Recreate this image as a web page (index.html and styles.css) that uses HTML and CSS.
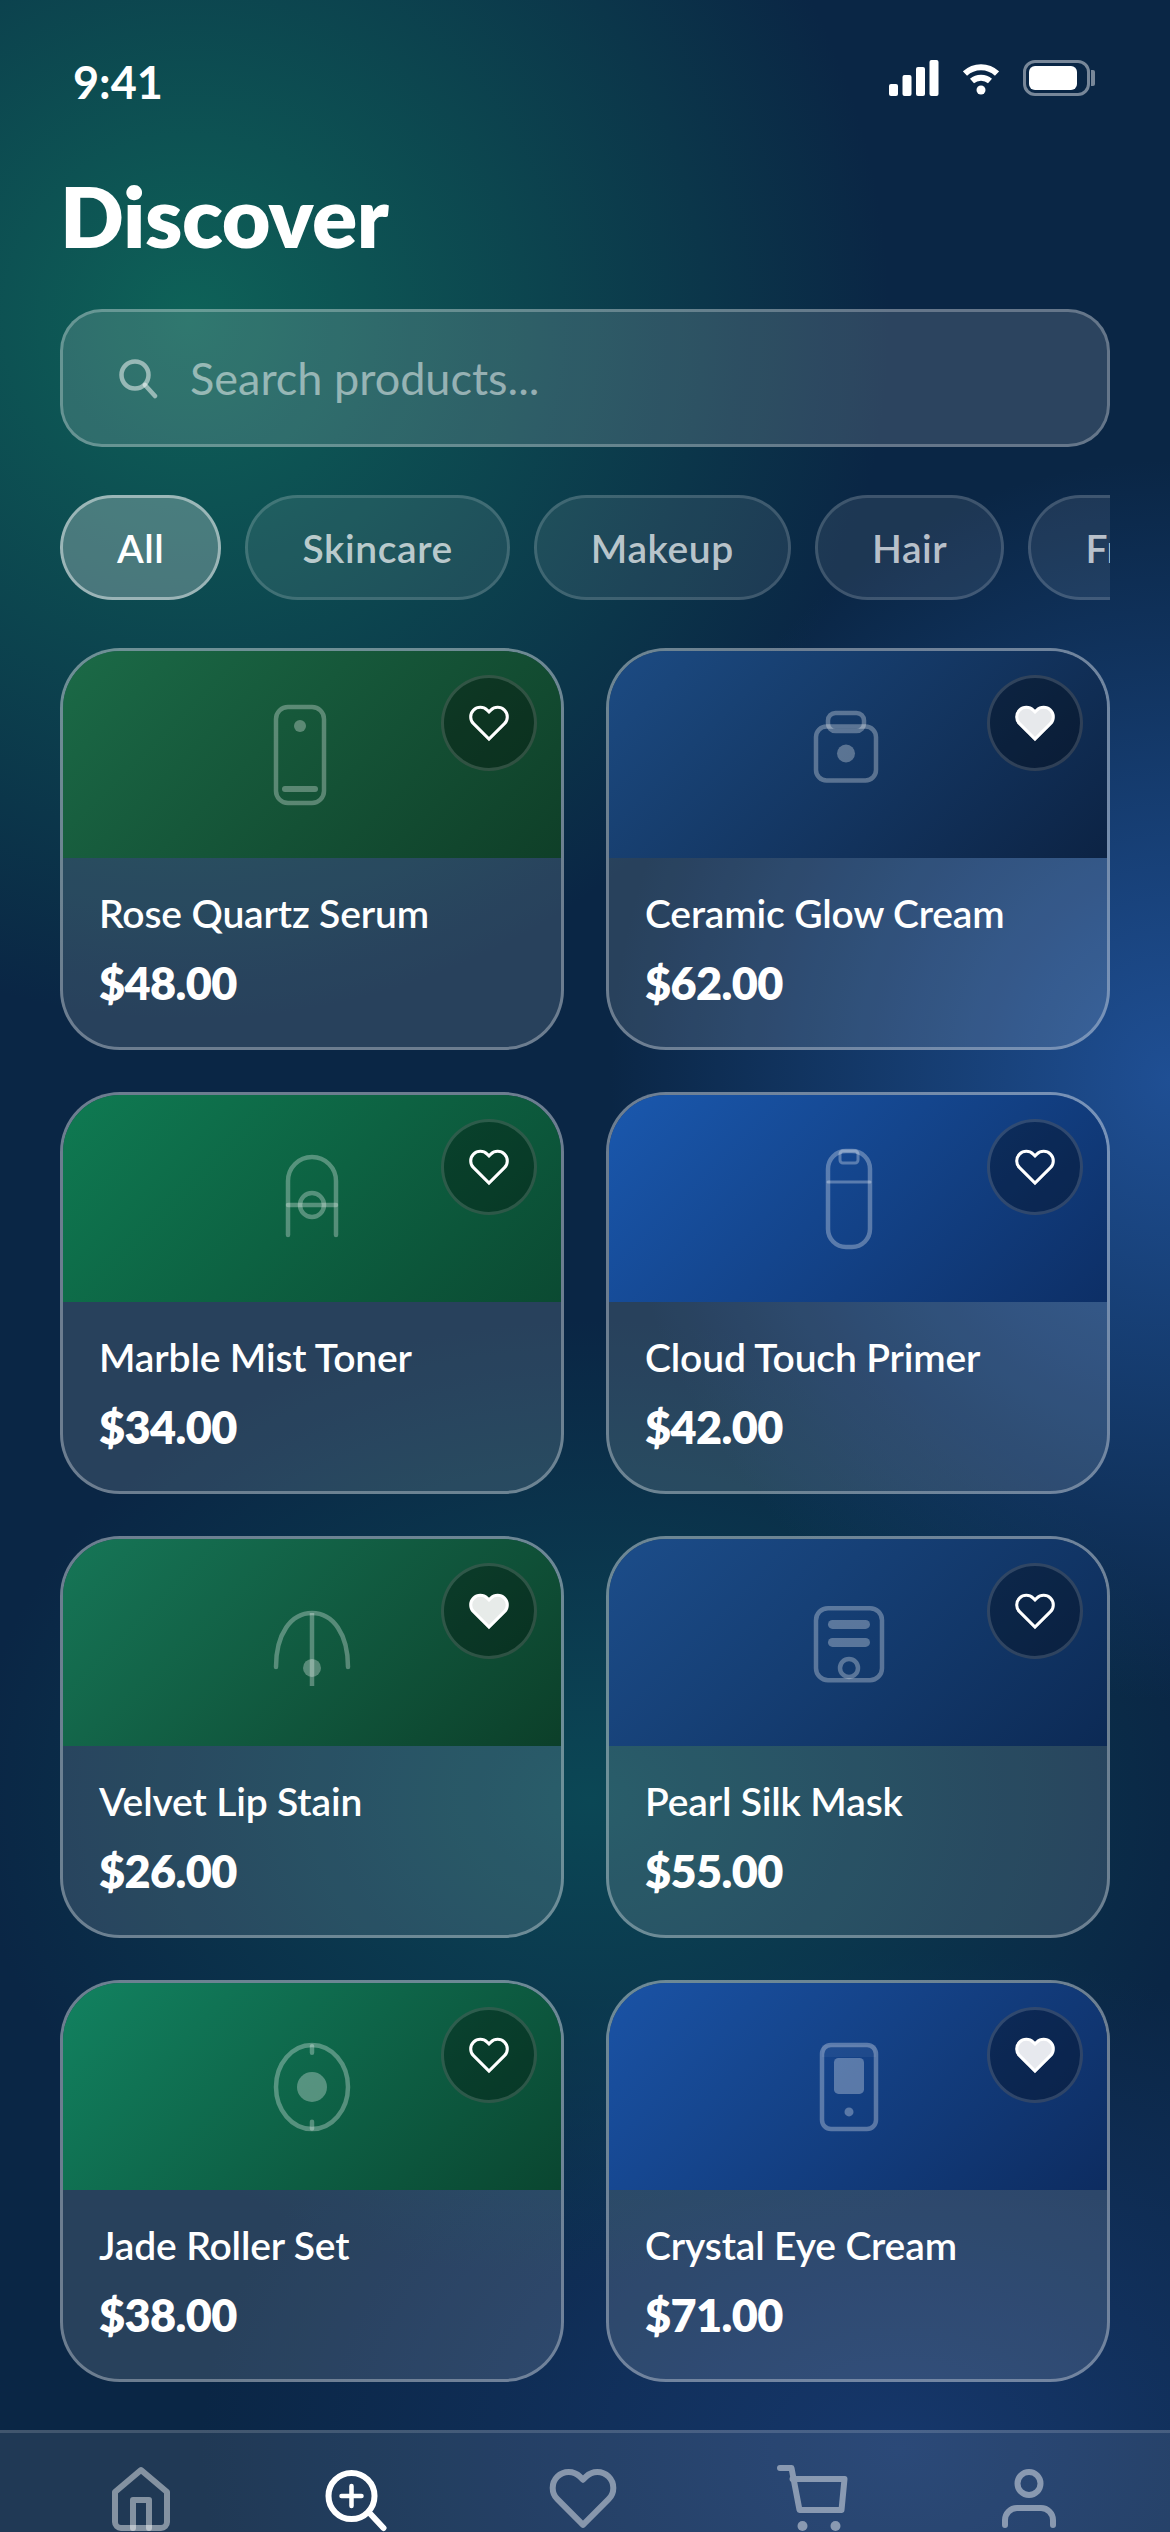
FILE: index.html
```html
<!DOCTYPE html>
<html lang="en">
<head>
<meta charset="utf-8">
<title>Discover</title>
<link rel="stylesheet" href="styles.css">
</head>
<body>
<div class="app">
  <header class="status">
    <span class="time">9:41</span>
    <div class="status-icons">
      <svg class="signal" width="50" height="36" viewBox="0 0 50 36"><rect x="0" y="24" width="9" height="12" rx="2"/><rect x="13.5" y="15" width="9" height="21" rx="2"/><rect x="27" y="7" width="9" height="29" rx="2"/><rect x="40.5" y="0" width="9" height="36" rx="2"/></svg>
      <svg class="wifi" width="36" height="32" viewBox="0 0 36 32"><path d="M2 10.5C11 2 25 2 34 10.5"/><path d="M9 18C14 13.5 22 13.5 27 18"/><circle class="wifi-dot" cx="18" cy="27" r="4.5"/></svg>
      <div class="battery"><div class="battery-body"><div class="battery-fill"></div></div><div class="battery-nib"></div></div>
    </div>
  </header>
  <h1 class="title">Discover</h1>
  <div class="search">
    <svg class="search-icon" width="42" height="42" viewBox="0 0 42 42"><circle cx="18" cy="18" r="13.5"/><path d="M28 28l10 11"/></svg>
    <span class="search-text">Search products...</span>
  </div>
  <div class="chips">
    <span class="chip active">All</span>
    <span class="chip">Skincare</span>
    <span class="chip">Makeup</span>
    <span class="chip">Hair</span>
    <span class="chip">Fragrance</span>
  </div>
  <main class="grid">
    <article class="card">
      <div class="thumb g1">
        <svg class="art" viewBox="0 0 48 48"><rect x="12" y="8" width="16" height="32" rx="4"/><circle class="solid" cx="20" cy="14.3" r="2"/><rect class="solid" x="14" y="34.3" width="12" height="2" rx="1"/></svg>
        <button class="fav"><svg viewBox="0 0 24 24"><path d="M20.84 4.61a5.5 5.5 0 0 0-7.78 0L12 5.67l-1.06-1.06a5.5 5.5 0 0 0-7.78 7.78L12 21.23l8.84-8.84a5.5 5.5 0 0 0 0-7.78z"/></svg></button>
      </div>
      <div class="info"><div class="name">Rose Quartz Serum</div><div class="price">$48.00</div></div>
    </article>
    <article class="card">
      <div class="thumb b1">
        <svg class="art" viewBox="0 0 48 48"><rect x="10" y="14.5" width="20" height="18" rx="3.5"/><rect x="14" y="10" width="12" height="6" rx="2.5"/><circle class="solid" cx="20" cy="23.5" r="3"/></svg>
        <button class="fav on"><svg viewBox="0 0 24 24"><path d="M20.84 4.61a5.5 5.5 0 0 0-7.78 0L12 5.67l-1.06-1.06a5.5 5.5 0 0 0-7.78 7.78L12 21.23l8.84-8.84a5.5 5.5 0 0 0 0-7.78z"/></svg></button>
      </div>
      <div class="info"><div class="name">Ceramic Glow Cream</div><div class="price">$62.00</div></div>
    </article>
    <article class="card">
      <div class="thumb g2">
        <svg class="art" viewBox="0 0 48 48"><path d="M16 36V18a8 8 0 0 1 16 0V36"/><circle cx="24" cy="26" r="4"/><path d="M16 26H32"/></svg>
        <button class="fav"><svg viewBox="0 0 24 24"><path d="M20.84 4.61a5.5 5.5 0 0 0-7.78 0L12 5.67l-1.06-1.06a5.5 5.5 0 0 0-7.78 7.78L12 21.23l8.84-8.84a5.5 5.5 0 0 0 0-7.78z"/></svg></button>
      </div>
      <div class="info"><div class="name">Marble Mist Toner</div><div class="price">$34.00</div></div>
    </article>
    <article class="card">
      <div class="thumb b2">
        <svg class="art" viewBox="0 0 48 48"><rect x="14" y="8" width="14" height="32" rx="6"/><rect class="thin" x="18" y="8" width="6" height="4" rx="1"/><path class="thin" d="M14 18.3H28"/></svg>
        <button class="fav"><svg viewBox="0 0 24 24"><path d="M20.84 4.61a5.5 5.5 0 0 0-7.78 0L12 5.67l-1.06-1.06a5.5 5.5 0 0 0-7.78 7.78L12 21.23l8.84-8.84a5.5 5.5 0 0 0 0-7.78z"/></svg></button>
      </div>
      <div class="info"><div class="name">Cloud Touch Primer</div><div class="price">$42.00</div></div>
    </article>
    <article class="card">
      <div class="thumb g3">
        <svg class="art" viewBox="0 0 48 48"><path d="M12 32C12 21 17 14 24 14C31 14 36 21 36 32"/><path class="butt" d="M24 14V38.3"/><circle class="solid" cx="24" cy="32.3" r="3"/></svg>
        <button class="fav on"><svg viewBox="0 0 24 24"><path d="M20.84 4.61a5.5 5.5 0 0 0-7.78 0L12 5.67l-1.06-1.06a5.5 5.5 0 0 0-7.78 7.78L12 21.23l8.84-8.84a5.5 5.5 0 0 0 0-7.78z"/></svg></button>
      </div>
      <div class="info"><div class="name">Velvet Lip Stain</div><div class="price">$26.00</div></div>
    </article>
    <article class="card">
      <div class="thumb b3">
        <svg class="art" viewBox="0 0 48 48"><rect x="10" y="12.4" width="22" height="24" rx="4"/><rect class="solid" x="14" y="16.3" width="14" height="3" rx="1.5"/><rect class="solid" x="14" y="22.3" width="14" height="3" rx="1.5"/><circle cx="21" cy="32.3" r="3"/></svg>
        <button class="fav"><svg viewBox="0 0 24 24"><path d="M20.84 4.61a5.5 5.5 0 0 0-7.78 0L12 5.67l-1.06-1.06a5.5 5.5 0 0 0-7.78 7.78L12 21.23l8.84-8.84a5.5 5.5 0 0 0 0-7.78z"/></svg></button>
      </div>
      <div class="info"><div class="name">Pearl Silk Mask</div><div class="price">$55.00</div></div>
    </article>
    <article class="card">
      <div class="thumb g4">
        <svg class="art" viewBox="0 0 48 48"><ellipse cx="24" cy="24" rx="12" ry="14"/><circle class="solid" cx="24" cy="24" r="5"/><path d="M24 10.4V12.6M24 35.6V37.8"/></svg>
        <button class="fav"><svg viewBox="0 0 24 24"><path d="M20.84 4.61a5.5 5.5 0 0 0-7.78 0L12 5.67l-1.06-1.06a5.5 5.5 0 0 0-7.78 7.78L12 21.23l8.84-8.84a5.5 5.5 0 0 0 0-7.78z"/></svg></button>
      </div>
      <div class="info"><div class="name">Jade Roller Set</div><div class="price">$38.00</div></div>
    </article>
    <article class="card">
      <div class="thumb b4">
        <svg class="art" viewBox="0 0 48 48"><rect x="12" y="10" width="18" height="28" rx="3"/><rect class="faint" x="12" y="10" width="18" height="4"/><rect class="solid" x="16" y="14.3" width="10" height="12" rx="1.5"/><circle class="solid" cx="21" cy="32.3" r="1.5"/></svg>
        <button class="fav on"><svg viewBox="0 0 24 24"><path d="M20.84 4.61a5.5 5.5 0 0 0-7.78 0L12 5.67l-1.06-1.06a5.5 5.5 0 0 0-7.78 7.78L12 21.23l8.84-8.84a5.5 5.5 0 0 0 0-7.78z"/></svg></button>
      </div>
      <div class="info"><div class="name">Crystal Eye Cream</div><div class="price">$71.00</div></div>
    </article>
  </main>
  <nav class="tabbar">
    <svg class="tab" viewBox="0 0 96 84"><path d="M22 30L48 8L74 30V60a6 6 0 0 1-6 6H28a6 6 0 0 1-6-6Z"/><path d="M40 66V38H56V66"/></svg>
    <svg class="tab current" viewBox="0 0 96 84"><circle cx="36.5" cy="34" r="23"/><path d="M36.5 24V44M26.500 34H46.500" class="plus"/><path d="M55.500 52L68.500 66"/></svg>
    <svg class="tab" viewBox="0 0 96 84"><path transform="translate(11.2 1.3) scale(2.9)" class="scaled" d="M20.84 4.61a5.5 5.5 0 0 0-7.78 0L12 5.67l-1.06-1.06a5.5 5.5 0 0 0-7.78 7.78L12 21.23l8.84-8.84a5.5 5.5 0 0 0 0-7.78z"/></svg>
    <svg class="tab" viewBox="0 0 96 84"><path d="M21 6H32.500L40.500 48H82.500L85.500 17H33.500"/><circle class="wheel" cx="43.500" cy="64" r="5"/><circle class="wheel" cx="76.500" cy="64" r="5"/></svg>
    <svg class="tab" viewBox="0 0 96 84"><circle cx="48" cy="21.500" r="11.500"/><path d="M24 63V58a12 12 0 0 1 12-12H60a12 12 0 0 1 12 12V63"/></svg>
  </nav>
</div>
</body>
</html>
```
FILE: styles.css
```css
* { box-sizing: border-box; }
html, body { margin: 0; padding: 0; }
body { font-family: Lato, "Open Sans", sans-serif; color: #fff; }

.app {
  width: 1170px;
  height: 2532px;
  overflow: hidden;
  display: flex;
  flex-direction: column;
  background:
    radial-gradient(ellipse 700px 700px at 190px 320px, #0e6258 0%, rgba(14,98,88,0) 100%),
    radial-gradient(ellipse 560px 620px at 1170px 1080px, #1f4f94 0%, rgba(31,79,148,0) 100%),
    radial-gradient(ellipse 620px 480px at 590px 1800px, #0b4755 0%, rgba(11,71,85,0) 100%),
    radial-gradient(ellipse 700px 500px at 900px 2450px, #16376b 0%, rgba(22,55,107,0) 100%),
    #0a2645;
}

.status {
  flex: none;
  height: 132px;
  padding: 54px 75px 0 73px;
  display: flex;
  justify-content: space-between;
  align-items: flex-start;
}
.time { font-size: 45px; line-height: 56px; font-weight: 700; }
.status-icons { display: flex; align-items: flex-start; gap: 24px; padding-top: 6px; }
.signal { fill: #fff; }
.wifi { fill: none; stroke: #fff; stroke-width: 6; margin-top: 3px; }
.wifi-dot { fill: #fff; stroke: none; }
.battery { display: flex; align-items: center; gap: 1px; }
.battery-body { width: 67px; height: 36px; border: 3px solid rgba(255,255,255,.45); border-radius: 12px; padding: 3px; }
.battery-fill { width: 48px; height: 24px; background: #fff; border-radius: 6px; }
.battery-nib { width: 4px; height: 16px; background: rgba(255,255,255,.45); border-radius: 0 2px 2px 0; }

.title {
  flex: none;
  margin: 34px 60px 43px;
  font-size: 84px;
  line-height: 100px;
  font-weight: 800;
  letter-spacing: -.4px;
}

.search {
  flex: none;
  height: 138px;
  margin: 0 60px;
  padding: 0 54px;
  display: flex;
  align-items: center;
  gap: 31px;
  background: rgba(255,255,255,.14);
  border: 3px solid rgba(255,255,255,.27);
  border-radius: 42px;
}
.search-icon { flex: none; fill: none; stroke: rgba(255,255,255,.5); stroke-width: 4.500; stroke-linecap: round; }
.search-text { font-size: 45px; color: rgba(255,255,255,.5); }

.chips {
  flex: none;
  margin: 48px 60px 0;
  display: flex;
  gap: 24px;
  overflow: hidden;
}
.chip {
  flex: none;
  height: 105px;
  padding: 0 54px;
  display: flex;
  align-items: center;
  font-size: 39px;
  font-weight: 600;
  letter-spacing: .6px;
  color: rgba(255,255,255,.7);
  background: rgba(255,255,255,.08);
  border: 3px solid rgba(255,255,255,.15);
  border-radius: 54px;
}
.chip.active { color: #fff; background: rgba(255,255,255,.25); border-color: rgba(255,255,255,.45); }

.grid {
  flex: none;
  margin-top: 48px;
  padding: 0 60px;
  display: grid;
  grid-template-columns: 1fr 1fr;
  gap: 42px;
}
.card {
  height: 402px;
  overflow: hidden;
  background: rgba(255,255,255,.125);
  border: 3px solid rgba(255,255,255,.32);
  border-radius: 60px;
}
.thumb {
  position: relative;
  height: 207px;
  display: flex;
  align-items: center;
  justify-content: center;
}
.g1 { background: linear-gradient(135deg, #1b6a47, #0f3f28); }
.g2 { background: linear-gradient(135deg, #0f7a52, #0b4a32); }
.g3 { background: linear-gradient(135deg, #167657, #0c3f29); }
.g4 { background: linear-gradient(135deg, #128260, #0a4630); }
.b1 { background: linear-gradient(135deg, #1c4b83, #0c2344); }
.b2 { background: linear-gradient(135deg, #1a58ae, #0d2f66); }
.b3 { background: linear-gradient(135deg, #1c4d8a, #0c2a55); }
.b4 { background: linear-gradient(135deg, #1a53a6, #0d2c60); }

.art {
  width: 144px;
  height: 144px;
  fill: none;
  stroke: rgba(255,255,255,.3);
  stroke-width: 1.5;
  stroke-linecap: round;
}
.art .solid { fill: rgba(255,255,255,.3); stroke: none; }
.art .thin { stroke-width: 1; }
.art .butt { stroke-linecap: butt; }
.art .faint { fill: rgba(255,255,255,.05); stroke: none; }

.fav {
  position: absolute;
  top: 24px;
  right: 24px;
  width: 96px;
  height: 96px;
  padding: 0;
  display: flex;
  align-items: center;
  justify-content: center;
  background: rgba(0,0,0,.3);
  border: 3px solid rgba(255,255,255,.15);
  border-radius: 50%;
}
.fav svg { width: 42px; height: 42px; fill: none; stroke: #fff; stroke-width: 1.750; }
.fav.on svg { fill: rgba(255,255,255,.9); }

.info { padding: 27px 36px 34px; }
.name { font-size: 39px; line-height: 56px; font-weight: 600; letter-spacing: -.15px; white-space: nowrap; }
.price { margin-top: 12px; font-size: 45px; line-height: 60px; font-weight: 800; letter-spacing: -.6px; }

.tabbar {
  flex: none;
  margin-top: 48px;
  height: 150px;
  padding: 29px 93px 0;
  display: flex;
  justify-content: space-between;
  align-items: flex-start;
  background: rgba(255,255,255,.09);
  border-top: 3px solid rgba(255,255,255,.15);
}
.tab {
  flex: none;
  width: 96px;
  height: 84px;
  fill: none;
  stroke: rgba(255,255,255,.45);
  stroke-width: 6;
  stroke-linecap: round;
  stroke-linejoin: round;
}
.tab .scaled { stroke-width: 2.070; }
.tab .wheel { fill: rgba(255,255,255,.45); stroke: none; }
.tab.current { stroke: #fff; }
.tab .plus { stroke-width: 4.500; }
```
